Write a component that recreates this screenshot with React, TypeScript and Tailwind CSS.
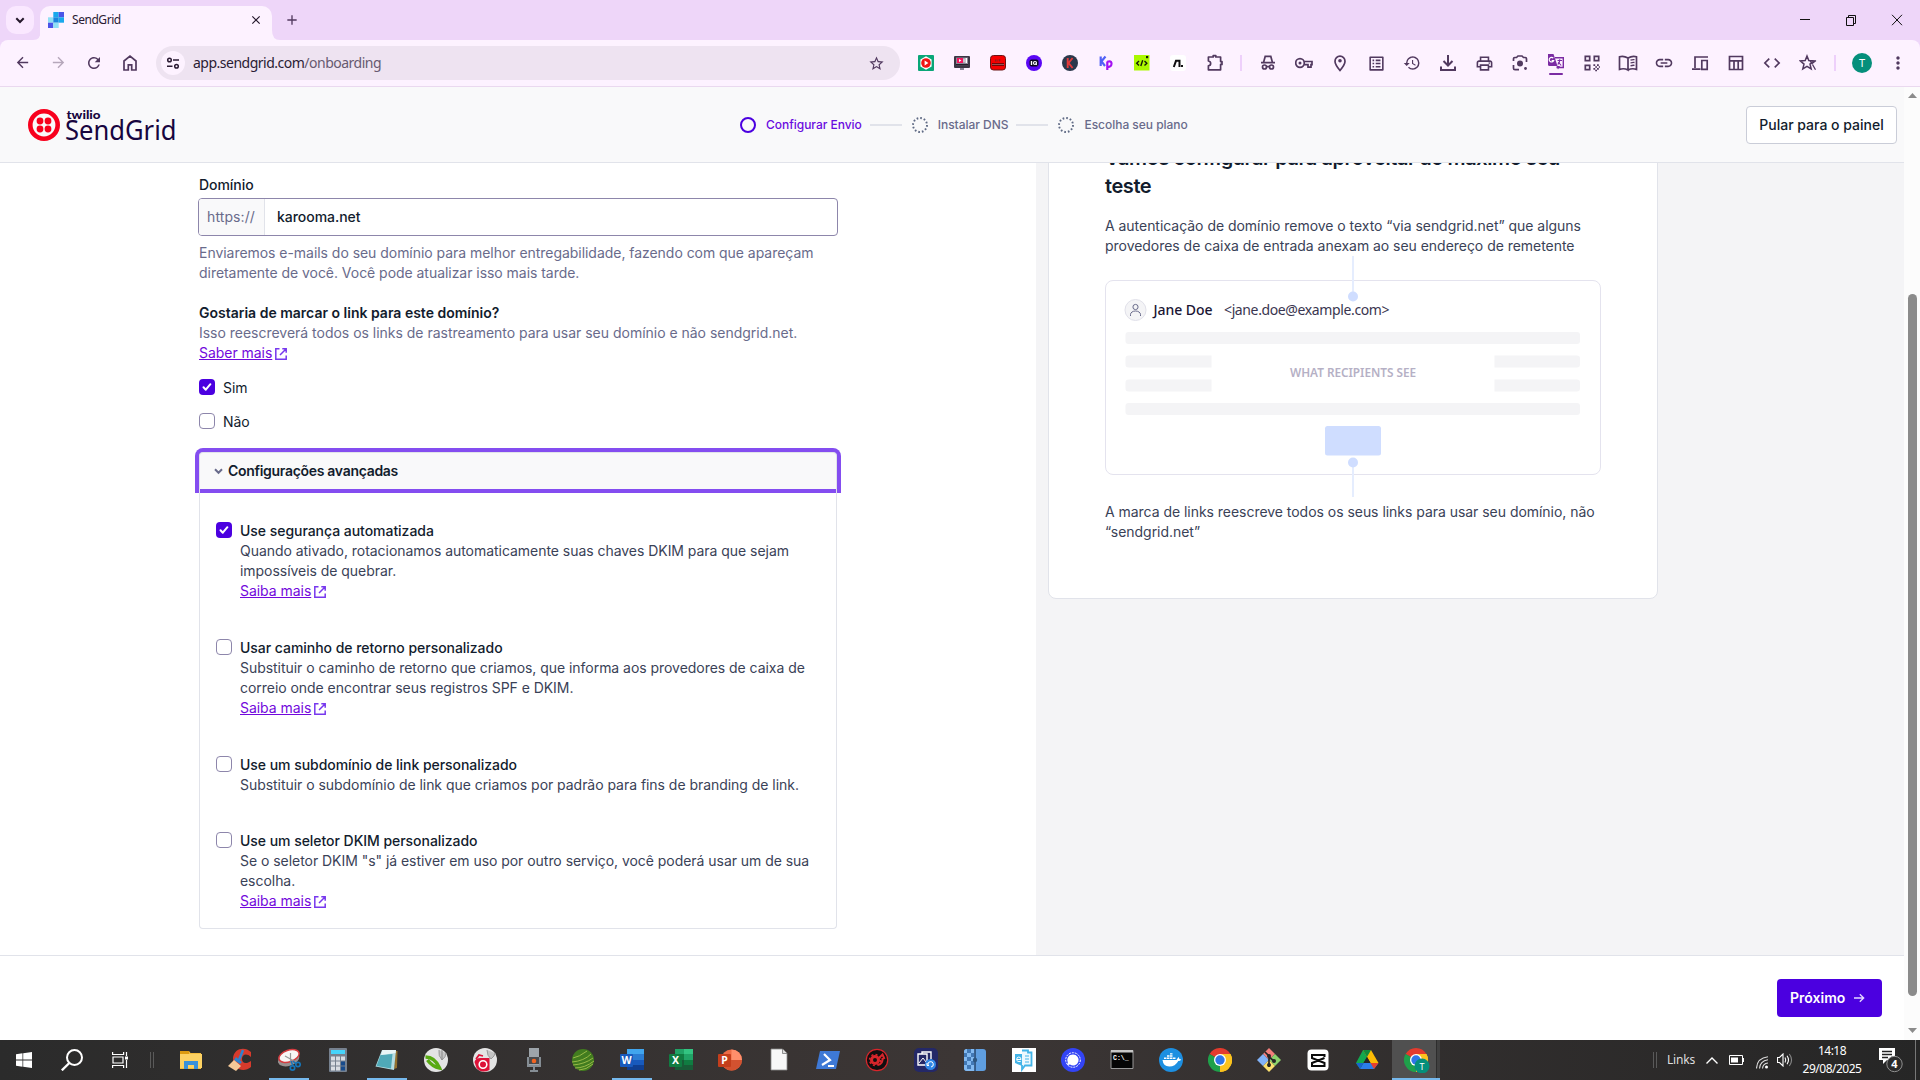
import React from "react";
import {
  MdArrowBack,
  MdArrowForward,
  MdRefresh,
  MdStarBorder,
  MdHistory,
  MdOutlinePrint,
  MdOutlineListAlt,
  MdLink,
  MdCode,
  MdMoreVert,
  MdClose,
  MdAdd,
} from "react-icons/md";

type Kids = { children: React.ReactNode };

/* ---------- Toolbar icons ---------- */

const ink = "#51395f";

function Glyph({ children, size = 18, box = 18 }: Kids & { size?: number; box?: number }) {
  return (
    <svg width={size} height={size} viewBox={`0 0 ${box} ${box}`} fill="none" stroke={ink} strokeWidth="1.7">
      {children}
    </svg>
  );
}

const extensionIcons: React.ReactNode[] = [
  <svg width="16" height="16" viewBox="0 0 16 16">
    <rect width="16" height="16" rx="1" fill="#0aa678" />
    <path d="M8 1.2 13.6 4.6v6.8L8 14.8 2.4 11.4V4.6z" fill="#fff" />
    <circle cx="8" cy="8" r="4.8" fill="#f01414" />
    <path d="M6.6 5.6v4.8L10.4 8z" fill="#fff" />
  </svg>,
  <svg width="16" height="16" viewBox="0 0 16 16">
    <rect y="1" width="16" height="12" rx="1" fill="#3b3644" />
    <rect x="2" y="2.5" width="12" height="8" fill="#8d8797" />
    <rect x="3" y="3" width="6" height="5" fill="#f3165e" />
    <path d="m5 4 2.4 1.4L5 7z" fill="#fff" />
    <path d="M9.500 3.500h1v4h-1zM11.500 3h1.500v5h-1.500z" fill="#fff" />
    <rect x="2" y="9" width="12" height="1.500" fill="#24202c" />
    <rect x="6" y="13" width="4" height="2" fill="#8c8798" />
  </svg>,
  <svg width="16" height="16" viewBox="0 0 16 16">
    <rect x=".5" y=".5" width="15" height="14.500" rx="3" fill="#f60000" stroke="#6b1414" />
    <path d="M5.500 4.500v2M7 4.500v2M8.500 5h2M9.500 4.500v2" stroke="#7a2020" strokeWidth=".8" />
    <path d="M2 9.500h12" stroke="#4a0808" strokeWidth="2.500" />
    <path d="M2.500 9.500h11" stroke="#e0a0a0" strokeWidth="1" strokeDasharray="1 1" />
  </svg>,
  <svg width="16" height="16" viewBox="0 0 16 16">
    <circle cx="8" cy="8" r="8" fill="#5a06f5" />
    <rect x="3.500" y="4.500" width="9" height="7" rx="2" fill="#0b0520" />
    <path d="M5.500 6v4" stroke="#fff" strokeWidth="1.400" />
    <circle cx="9" cy="8" r="1.500" stroke="#fff" strokeWidth="1.200" fill="none" />
    <path d="m9.500 8.500 1.500 1.700" stroke="#fff" />
  </svg>,
  <svg width="16" height="16" viewBox="0 0 16 16">
    <circle cx="8" cy="8" r="8" fill="#2b384b" />
    <path d="M5.700 3v10M10.600 3 6.600 8l4 5" stroke="#e23b3b" strokeWidth="1.900" fill="none" />
  </svg>,
  <svg width="16" height="16" viewBox="0 0 16 16" fill="none" strokeWidth="2.200">
    <path d="M2.700 1.500v9.500M7.500 1.500 3.500 6.300l3.500 4.700" stroke="#5161f6" />
    <path d="M9.300 15V6.500M9.300 6.800c4-1.300 4.700.7 4 3.200-.6 2-2.600 2-4 1.500" stroke="#a412f2" />
  </svg>,
  <svg width="16" height="16" viewBox="0 0 16 16">
    <rect width="15.500" height="15.500" fill="#abf900" />
    <path d="M5 6 2.700 8.200 5 10.400M10.500 6l2.300 2.200-2.300 2.200M8.700 5.300 6.800 11" stroke="#151b08" strokeWidth="1.400" fill="none" />
    <rect x="12" y="1" width="2.200" height="2.200" fill="#151b08" />
  </svg>,
  <svg width="16" height="16" viewBox="0 0 16 16">
    <rect width="16" height="16" rx="3" fill="#fff" />
    <path d="M3.800 12 6 5.800h3.500V12" stroke="#111" strokeWidth="2" fill="none" />
    <rect x="11" y="10" width="2" height="2" fill="#111" />
  </svg>,
  <svg className="ml-px" width="18" height="18" viewBox="0 0 18 18" fill="none" stroke={ink} strokeWidth="1.700" strokeLinejoin="round">
    <path d="M2.400 3h4.800V1.600h2.600V3h4.800v4.600h1.400v2.800h-1.400v5.400H2.400v-4c3-.6 3-4.200 0-4.800z" />
  </svg>,
];

const toolIcons: React.ReactNode[] = [
  <Glyph>
    <path d="M2 8.700h14M4.600 8.200l1.600-5.800h5.600l1.600 5.800" />
    <circle cx="5.500" cy="13" r="2" />
    <circle cx="12.500" cy="13" r="2" />
    <path d="M7.500 12.600h3" />
  </Glyph>,
  <Glyph>
    <circle cx="5" cy="9" r="4.300" />
    <circle cx="5" cy="9" r="1.500" fill={ink} stroke="none" />
    <path d="M9.200 7.500H17v3.200h-1v2.500h-3v-2.500H9.200" />
  </Glyph>,
  <Glyph>
    <path d="M9 16.500C5.500 12.300 4 9.700 4 7.200a5 5 0 0 1 10 0c0 2.500-1.500 5.100-5 9.300z" />
    <circle cx="9" cy="6.800" r="1.800" fill={ink} stroke="none" />
  </Glyph>,
  <MdOutlineListAlt size={19} color={ink} />,
  <MdHistory size={18} color={ink} />,
  <Glyph>
    <path d="M9 1v10M4.500 7 9 11.500 13.500 7" strokeWidth="2" />
    <path d="M2 12.500V16h14v-3.500" strokeWidth="2" />
  </Glyph>,
  <MdOutlinePrint size={19} color={ink} />,
  <Glyph>
    <path d="M2.500 7V4.800q0-1.300 1.300-1.300H5.500L7 2h4l1.500 1.500h1.700q1.300 0 1.300 1.300V8M2.500 11v3.200q0 1.500 1.500 1.500h4" />
    <circle cx="9" cy="9.500" r="3" fill={ink} stroke="none" />
    <circle cx="14.500" cy="14.500" r="1.400" fill={ink} stroke="none" />
  </Glyph>,
  <svg width="18" height="24" viewBox="0 0 18 24">
    <path d="M8 6.700h8.300v9.800H9.500" fill="none" stroke="#7b2ba3" strokeWidth="1.400" />
    <path d="M1 3h5.500l4 12H2.500Q1 15 1 13.500z" fill="#7b2ba3" />
    <path d="M6.300 7.200a2.300 2.300 0 1 0 .3 2.500H4.700" stroke="#fff" strokeWidth="1.200" fill="none" />
    <path d="m9.500 15 1.500 3.500 2-3.500z" fill="#7b2ba3" />
    <path d="M10.500 9.500h4.500M12.700 8.300v1.200c0 2-.7 3-2 4M11.200 11l3 3.500" stroke="#7b2ba3" strokeWidth="1.100" fill="none" />
    <rect x="2" y="22" width="14" height="2" rx="1" fill="#7b2ba3" />
  </svg>,
  <Glyph>
    <path d="M2.300 2.300h4.400v4.400H2.300zM11.300 2.300h4.400v4.400h-4.400zM2.300 11.300h4.400v4.400H2.300z" />
    <path d="M10.400 11.200h1.800M14 11.200h1.800M12.200 13h1.800M15.800 13h1.200M10.400 14.800h1.800M14 14.800h1.800M12.200 16.500h1.800" strokeWidth="1.700" />
  </Glyph>,
  <Glyph size={20} box={20}>
    <path d="M10 5v12c-3-1.600-5.500-1.600-8.500-.6V3.800C4.500 2.900 7 3.300 10 5c3-1.700 5.500-2.100 8.500-1.200v12.600c-3-1-5.500-1-8.500.6" />
    <path d="M12.500 7.200q2-.7 4-.5M12.500 10q2-.7 4-.5M12.500 12.800q2-.7 4-.5" strokeWidth="1.300" />
  </Glyph>,
  <MdLink size={20} color={ink} />,
  <Glyph>
    <path d="M17 3H4v11M1 15.200h8.500M10.800 6.500h5.400v8.800h-5.400z" />
  </Glyph>,
  <Glyph>
    <path d="M2.500 2.500h13v13h-13zM2.500 6.800h13M7 7v8M11.200 7v8" />
  </Glyph>,
  <MdCode size={20} color={ink} />,
  <Glyph>
    <path d="m8 2 1.800 4.500 4.900.4-3.700 3.200 1.200 4.900L8 12.400 3.800 15 5 10.100 1.300 6.900l4.900-.4z" strokeWidth="1.500" />
    <path d="m12.500 10 4.500-3.500M13.500 10.500l3 5.300M11 6.500l2 3" strokeWidth="1.300" />
  </Glyph>,
];

function BrowserChrome() {
  return (
    <div className="bg-[#eed6f9]">
      <div className="flex h-10 items-end">
        <div className="mb-1.5 ml-1.5 flex h-7 w-7 items-center justify-center rounded-[10px] bg-[#fae8ff]">
          <svg width="10" height="7" viewBox="0 0 10 7" fill="none" stroke="#24172b" strokeWidth="2"><path d="m1.300 1.300 3.700 3.700 3.700-3.700" /></svg>
        </div>
        <svg className="-ml-px mr-[-1px]" width="8" height="10" viewBox="0 0 8 10"><path d="M0 10Q8 10 8 0v10z" fill="#fdf2ff" /></svg>
        <div className="flex h-[34px] w-[232px] items-center rounded-t-[10px] bg-[#fdf2ff] pb-1.5 pr-[9px] pl-2">
          <svg width="16" height="16" viewBox="0 0 16 16">
            <path d="M0 5.300h5.300v5.400H0z" fill="#8fe0f5" />
            <path d="M0 10.700h5.300V16H0z" fill="#4a54e8" />
            <path d="M5.300 0h5.400v5.300H5.300z" fill="#19a8ec" />
            <path d="M5.300 5.300h5.400v5.400H5.300z" fill="#1a86dd" />
            <path d="M10.700 0H16v5.300h-5.300z" fill="#4a54e8" />
            <path d="M10.700 5.300H16v5.400h-5.300z" fill="#19a8ec" />
            <path d="M5.300 10.700h5.400V16H5.300z" fill="#8fe0f5" />
          </svg>
          <span className="ml-2 flex-1 text-xs tracking-[-0.45px] text-[#2a1b33]">SendGrid</span>
          <MdClose size={14} color="#24172b" />
        </div>
        <svg className="mr-1" width="8" height="10" viewBox="0 0 8 10"><path d="M0 0q0 10 8 10H0z" fill="#fdf2ff" /></svg>
        <MdAdd className="mb-3" size={16} color="#51395f" />
        <div className="mb-[14px] ml-auto flex items-center pr-[17px]">
          <svg width="104" height="12" viewBox="0 0 104 12" fill="none" stroke="#111">
            <path d="M1 5.500h10" />
            <path d="M47.500 3.500h7v8h-7zM49.500 3.500v-2h7v8h-2" />
            <path d="m93 .8 10 10.400M103 .8 93 11.200" />
          </svg>
        </div>
      </div>
      <div className="flex h-[47px] items-center rounded-t-lg border-b border-[#ead9ef] bg-[#fdf2ff]">
        <div className="flex w-[152px] pl-1">
          <div className="flex w-9 justify-center"><MdArrowBack size={17} color={ink} /></div>
          <div className="flex w-9 justify-center"><MdArrowForward size={17} color="#b6a7bb" /></div>
          <div className="flex w-9 justify-center"><MdRefresh size={18} color={ink} /></div>
          <div className="flex w-9 justify-center">
            <Glyph><path d="M3 16V7l6-4.800L15 7v9h-4.300v-5.200H7.300V16z" /></Glyph>
          </div>
        </div>
        <div className="ml-1 flex h-[34px] w-[744px] items-center rounded-full bg-[#eee3f1] pr-[15px] pl-[5px]">
          <div className="flex h-6 w-6 items-center justify-center rounded-full bg-[#fdf2ff]">
            <svg width="14" height="14" viewBox="0 0 14 14" fill="none" stroke="#2a1b33" strokeWidth="1.500">
              <circle cx="3.500" cy="4" r="1.800" /><path d="M7 4h6M1 10.300h5.500" /><circle cx="10.500" cy="10.300" r="1.800" />
            </svg>
          </div>
          <span className="ml-2 flex-1 text-sm tracking-[-0.5px] text-[#675a70]"><span className="text-[#2a1b33]">app.sendgrid.com</span>/onboarding</span>
          <MdStarBorder size={17} color={ink} />
        </div>
        <div className="ml-2 flex items-center">
          {extensionIcons.map((icon, i) => <div key={i} className="flex w-9 justify-center">{icon}</div>)}
          <div className="flex w-[18px] justify-center"><div className="h-4 w-0.5 bg-[#eed0fb]" /></div>
          {toolIcons.map((icon, i) => <div key={i} className="flex h-6 w-9 items-center justify-center">{icon}</div>)}
          <div className="flex w-[18px] justify-center"><div className="h-4 w-0.5 bg-[#eed0fb]" /></div>
          <div className="flex w-9 justify-center">
            <div className="flex h-5 w-5 items-center justify-center rounded-full bg-[#058f7b] text-[11px] text-white">T</div>
          </div>
          <div className="flex w-9 justify-center"><MdMoreVert size={20} color={ink} /></div>
        </div>
      </div>
    </div>
  );
}

/* ---------- Page ---------- */

function Logo() {
  return (
    <svg width="150" height="40" viewBox="0 0 150 40">
      <circle cx="16" cy="20" r="13.700" fill="none" stroke="#f8001d" strokeWidth="4.600" />
      {[[12, 16], [20, 16], [12, 24], [20, 24]].map(([x, y]) => <circle key={`${x}-${y}`} cx={x} cy={y} r="3.400" fill="#f8001d" />)}
      <text x="38.500" y="13.500" fontSize="12" fontWeight="900" fontFamily="Lato, sans-serif" fill="#170540" textLength="34" lengthAdjust="spacingAndGlyphs">twilio</text>
      <text x="37" y="35" fontSize="26.500" fontFamily="'Noto Sans', sans-serif" fill="#170540" textLength="111.500" lengthAdjust="spacingAndGlyphs">SendGrid</text>
    </svg>
  );
}

function Step({ label, active }: { label: string; active?: boolean }) {
  return (
    <div className="flex items-center">
      <svg width="16" height="16" viewBox="0 0 16 16" fill="none">
        {active
          ? <circle cx="8" cy="8" r="7" stroke="#4b00e0" strokeWidth="2" />
          : <circle cx="8" cy="8" r="7" stroke="#606b85" strokeWidth="1.900" strokeDasharray="1.700 1.965" />}
      </svg>
      <span className={active ? "pl-2.5 text-xs font-medium tracking-[-0.03px] whitespace-nowrap text-[#6a0be0]" : "pl-2.5 text-xs font-medium tracking-[-0.03px] whitespace-nowrap text-[#696b8b]"}>{label}</span>
    </div>
  );
}

function PageHeader() {
  return (
    <header className="flex h-[76px] items-center border-b border-[#e1e3ea] bg-[#f9f9fa] pr-[7px] pl-7">
      <div className="w-[712px]"><Logo /></div>
      <div className="flex flex-1 items-center">
        <Step label="Configurar Envio" active />
        <div className="mr-[10px] ml-2 h-0.5 w-8 bg-[#e1e3ea]" />
        <Step label="Instalar DNS" />
        <div className="mr-[10px] ml-2 h-0.5 w-8 bg-[#e1e3ea]" />
        <Step label="Escolha seu plano" />
      </div>
      <button className="h-[38px] w-[151px] rounded border border-[#cacdd8] bg-white text-sm font-medium whitespace-nowrap text-[#121c2d]">Pular para o painel</button>
    </header>
  );
}

function Check({ on }: { on?: boolean }) {
  return on ? (
    <div className="flex h-4 w-4 shrink-0 items-center justify-center rounded bg-[#4b00e0]">
      <svg width="10" height="10" viewBox="0 0 10 10" fill="none" stroke="#fff" strokeWidth="2" strokeLinecap="round" strokeLinejoin="round"><path d="m1.500 5.300 2.300 2.400 4.600-5.500" /></svg>
    </div>
  ) : (
    <div className="h-4 w-4 shrink-0 rounded border border-[#8d86ab] bg-white" />
  );
}

function MoreLink({ children }: Kids) {
  return (
    <a className="flex h-5 items-center text-sm leading-5 tracking-[-0.04px] text-[#7208dc]">
      <span className="underline">{children}</span>
      <svg className="mt-0.5 ml-[3px]" width="12" height="12" viewBox="0 0 12 12" fill="none" stroke="#7738ee" strokeWidth="1.500">
        <path d="M4.500.8H.8v10.400h10.400V7.500M7.300.8h3.900v3.900M11 1 5 7" />
      </svg>
    </a>
  );
}

function Option({ title, text, on, link }: { title: string; text: string; on?: boolean; link?: boolean }) {
  return (
    <div className="flex">
      <div className="mt-px mr-2"><Check on={on} /></div>
      <div className="text-sm leading-5 text-[#3a4257]">
        <div className="font-medium text-[#121c2d]">{title}</div>
        <p className="w-[575px]">{text}</p>
        {link && <MoreLink>Saiba mais</MoreLink>}
      </div>
    </div>
  );
}

function FormColumn() {
  return (
    <main className="w-[1036px] bg-white pt-3 pl-[199px] text-sm leading-5 tracking-[-0.04px]">
      <div className="font-medium text-[#121c2d]">Domínio</div>
      <div className="mt-[3px] -ml-px flex h-[38px] w-[640px] overflow-hidden rounded border border-[#8d86ab]">
        <div className="flex w-[66px] items-center border-r border-[#e1e3ea] bg-[#f9f9fa] pl-2 tracking-[0.1px] text-[#696b8b]">https://</div>
        <div className="flex items-center pl-3 font-medium text-[#121c2d]">karooma.net</div>
      </div>
      <p className="mt-[7px] w-[638px] text-[#696b8b]">Enviaremos e-mails do seu domínio para melhor entregabilidade, fazendo com que apareçam diretamente de você. Você pode atualizar isso mais tarde.</p>
      <div className="mt-5 font-semibold tracking-normal text-[#121c2d]">Gostaria de marcar o link para este domínio?</div>
      <p className="tracking-[-0.015px] text-[#696b8b]">Isso reescreverá todos os links de rastreamento para usar seu domínio e não sendgrid.net.</p>
      <MoreLink>Saber mais</MoreLink>
      <div className="mt-[15px] flex text-[#121c2d]"><div className="mt-px mr-2"><Check on /></div>Sim</div>
      <div className="mt-[14px] flex text-[#121c2d]"><div className="mt-px mr-2"><Check /></div>Não</div>
      <div className="mt-5 w-[638px]">
        <div className="flex h-[37px] items-center rounded-t border border-b-0 border-[#e1e3ea] bg-[#f9f9fa] pl-[14px] font-semibold tracking-[-0.3px] text-[#121c2d] ring-4 ring-[#844df0]">
          <svg className="mr-[5px]" width="9" height="7" viewBox="0 0 9 7" fill="none" stroke="#696b8b" strokeWidth="2"><path d="m1 1.300 3.500 3.500L8 1.300" /></svg>
          Configurações avançadas
        </div>
        <div className="h-[440px] rounded-b border border-t-0 border-[#e1e3ea] pt-8 pl-4">
          <Option on link title="Use segurança automatizada" text="Quando ativado, rotacionamos automaticamente suas chaves DKIM para que sejam impossíveis de quebrar." />
          <div className="h-[37px]" />
          <Option link title="Usar caminho de retorno personalizado" text="Substituir o caminho de retorno que criamos, que informa aos provedores de caixa de correio onde encontrar seus registros SPF e DKIM." />
          <div className="h-[37px]" />
          <Option title="Use um subdomínio de link personalizado" text="Substituir o subdomínio de link que criamos por padrão para fins de branding de link." />
          <div className="h-9" />
          <Option link title="Use um seletor DKIM personalizado" text={'Se o seletor DKIM "s" já estiver em uso por outro serviço, você poderá usar um de sua escolha.'} />
        </div>
      </div>
    </main>
  );
}

function MailIllustration() {
  return (
    <svg className="block" width="496" height="246" viewBox="0 0 496 246">
      <rect x=".5" y="24.500" width="495" height="194" rx="7.500" fill="#fff" stroke="#e4e3ee" />
      <rect x="247" y="0" width="2" height="38" fill="#e5edfe" />
      <circle cx="248" cy="40.500" r="5" fill="#cfddff" />
      <circle cx="30.500" cy="54" r="10.500" fill="#f4f4f6" stroke="#e1e1ea" />
      <circle cx="30.500" cy="51" r="2.600" fill="none" stroke="#696b8b" />
      <path d="M25.500 60v-1.500a5 3.500 0 0 1 10 0V60" fill="none" stroke="#696b8b" />
      <text x="48.500" y="59.300" fontSize="14" fontWeight="500" fontFamily="'Noto Sans', sans-serif" fill="#1a1533" textLength="59">Jane Doe</text>
      <text x="119" y="59.300" fontSize="14" fontFamily="'Noto Sans', sans-serif" fill="#3a3650" textLength="165.500">{"<jane.doe@example.com>"}</text>
      <g fill="#f4f4f6">
        <rect x="20.500" y="76" width="454.500" height="12" rx="3" />
        <path d="M23.500 99.500h83v12h-83q-3 0-3-3v-6q0-3 3-3zM23.500 123.500h83v12h-83q-3 0-3-3v-6q0-3 3-3z" />
        <path d="M389.500 99.500h82.500q3 0 3 3v6q0 3-3 3h-82.500zM389.500 123.500h82.500q3 0 3 3v6q0 3-3 3h-82.500z" />
        <rect x="20.500" y="147" width="454.500" height="12" rx="3" />
      </g>
      <text x="248" y="121.300" fontSize="12.500" fontWeight="600" textAnchor="middle" fontFamily="'Noto Sans', sans-serif" fill="#b5b0c5" textLength="126" lengthAdjust="spacingAndGlyphs">WHAT RECIPIENTS SEE</text>
      <rect x="220" y="170" width="56" height="29.500" rx="2.500" fill="#cfddff" />
      <rect x="247" y="206" width="2" height="35" fill="#e5edfe" />
      <circle cx="248" cy="206.500" r="5" fill="#cfddff" />
    </svg>
  );
}

function InfoColumn() {
  return (
    <aside className="flex-1 overflow-hidden bg-[#f4f4f6] pl-3">
      <div className="-mt-20 h-[516px] w-[610px] rounded-lg border border-[#e1e3ea] bg-white pt-[60px] pl-14 text-sm leading-5 tracking-[-0.035px] text-[#3a4257]">
        <h2 className="w-[500px] text-xl leading-7 font-semibold tracking-[-0.42px] text-[#121c2d]">Vamos configurar para aproveitar ao máximo seu<br />teste</h2>
        <p className="mt-4 w-[500px]">A autenticação de domínio remove o texto “via sendgrid.net” que alguns provedores de caixa de entrada anexam ao seu endereço de remetente</p>
        <MailIllustration />
        <p className="w-[500px]">A marca de links reescreve todos os seus links para usar seu domínio, não “sendgrid.net”</p>
      </div>
    </aside>
  );
}

function Scrollbar() {
  return (
    <div className="flex w-4 flex-col items-center bg-[#fcfcfc]">
      <svg className="mt-[6px] ml-px" width="9" height="5" viewBox="0 0 9 5"><path d="M4.500 0 9 5H0z" fill="#8b8b8b" /></svg>
      <div className="mt-[196px] h-[702px] w-[9px] rounded-full bg-[#8b8b8b]" />
      <svg className="mt-8 ml-px" width="9" height="5" viewBox="0 0 9 5"><path d="M0 0h9L4.500 5z" fill="#8b8b8b" /></svg>
    </div>
  );
}

/* ---------- Taskbar ---------- */

function App24({ children }: Kids) {
  return <svg width="24" height="24" viewBox="0 0 24 24">{children}</svg>;
}

function Office({ letter, kids, tile }: { letter: string; kids: React.ReactNode; tile: string }) {
  return (
    <App24>
      {kids}
      <rect x="0" y="6" width="13" height="13" rx="1" fill={tile} />
      <text x="6.500" y="16" fontSize="10.500" fontWeight="700" textAnchor="middle" fill="#fff" fontFamily="'Noto Sans', sans-serif">{letter}</text>
    </App24>
  );
}

function ChromeShapes() {
  return (
    <>
      <path d="M12 12 1.600 6A12 12 0 0 1 22.400 6z" fill="#e33b2e" />
      <path d="M12 12 22.400 6A12 12 0 0 1 12 24z" fill="#fcc31e" />
      <path d="M12 12v12A12 12 0 0 1 1.600 6z" fill="#1fa04a" />
      <path d="M12 6h10.400A12 12 0 0 1 12 24l5.200-9z" fill="#fcc31e" />
      <circle cx="12" cy="12" r="6" fill="#fff" />
      <circle cx="12" cy="12" r="4.700" fill="#2f76e8" />
    </>
  );
}

const taskApps: { icon: React.ReactNode; open?: boolean }[] = [
  { icon: <App24><path d="M1 3h9l1.500 2H22v16H1z" fill="#f5bd3d" /><path d="M1 3h9v3H1z" fill="#dd9b10" /><path d="M1 6h22v14H1z" fill="#fdd263" /><path d="M5 21v-8h14v8h-4v-4H9v4z" fill="#3a91da" /></App24> },
  { icon: <App24><path d="M23 4C17-2 6 0 5 10c0 12 11 15 18 9v-6c-4 3-9 3-9-2s5-6 9-2z" fill="#d63a2c" /><path d="M15 2 11 12" stroke="#2c83cf" strokeWidth="2.500" /><path d="m8 9 6 5-2 2-6-4z" fill="#2c83cf" /><path d="M6 12 0 18l8 5 5-5z" fill="#f5c998" /></App24> },
  { open: true, icon: <App24><ellipse cx="11.500" cy="11.500" rx="11" ry="6.500" fill="#969090" transform="rotate(-18 11 11)" /><ellipse cx="12" cy="8" rx="10.500" ry="5.800" fill="#f8f6f6" stroke="#d53c40" strokeWidth="1.500" transform="rotate(-18 12 8)" /><path d="M13.500 5v9M8 8l9 5" stroke="#999" strokeWidth="1.200" /><path d="m14 13 2 5M16 13l3 3" stroke="#1675b8" strokeWidth="1.500" /><circle cx="15.500" cy="20" r="2.200" fill="none" stroke="#1675b8" strokeWidth="1.700" /><circle cx="21" cy="16.500" r="2.200" fill="none" stroke="#1675b8" strokeWidth="1.700" /></App24> },
  { icon: <App24><rect x="3" width="18" height="24" rx="1" fill="#76818f" /><path d="M5 2h14v4H5z" fill="#46d4fb" />{[8.500, 13.500, 18.500].map((y) => [5, 10, 15].map((x) => <rect key={`${x}-${y}`} x={x} y={y} width="4" height="4" fill={x === 15 && y > 9 ? "#174b8c" : "#d9dde3"} />))}</App24> },
  { open: true, icon: <App24><path d="M20 3h2.500l-.5 17-3 1z" fill="#92702e" /><path d="M7 2h14l-2 20L.5 18.500z" fill="#b5dde2" /><path d="m5.500 7 12-1-1.500 14.500L1.500 18z" fill="#4fa9b8" /><path d="M7.500 2H21l-.5 3L6 7z" fill="#e8f5f6" /></App24> },
  { icon: <App24><circle cx="12" cy="12" r="12" fill="#e4e4e4" /><path d="M1.500 9c6 0 11 4 14 11-6-1-9-4-12-8" fill="none" stroke="#58aa13" strokeWidth="3.500" /><path d="M15 2q-1 6 3 10 4-3 4-7" fill="#c4c4c4" stroke="#999" /><path d="M18 2v10" stroke="#888" /></App24> },
  { icon: <App24><circle cx="12" cy="12" r="12" fill="#e4e4e4" /><path d="M1.500 14q1-4 6-4h9v12q-8 4-13-2z" fill="#dc1238" /><circle cx="10" cy="16.500" r="3.800" fill="none" stroke="#fff" strokeWidth="1.600" /><path d="M3 11 6 7l4 1" fill="none" stroke="#dc1238" strokeWidth="1.800" /><path d="M14 2q0 6 4 9 4-3 4-6" fill="#c4c4c4" stroke="#999" /></App24> },
  { icon: <App24><path d="M7 0h10v17H7z" fill="#9da4aa" /><path d="M6 9v9h12V9" fill="none" stroke="#858d94" strokeWidth="2" /><path d="M12 18v5M8 23h8" stroke="#858d94" strokeWidth="2" /><path d="M7 9h10v7H7z" fill="#484a4d" /><circle cx="12" cy="13" r="2.300" fill="#f26522" /></App24> },
  { icon: <App24><circle cx="12" cy="12" r="11" fill="#427c1f" /><path d="M2 10q6-1 14-7M1 14q12-1 19-8M2 17q12-1 20-7M4 20q10 0 19-7M8 22q7 0 14-6" fill="none" stroke="#98b947" strokeWidth="1" /></App24> },
  { open: true, icon: <Office letter="W" tile="#185abd" kids={<><path d="M7 1h17v6H7z" fill="#41a5ee" /><path d="M7 6h17v6H7z" fill="#2b7cd3" /><path d="M7 12h17v5H7z" fill="#185abd" /><path d="M7 17h17v5H7z" fill="#103f91" /></>} /> },
  { icon: <Office letter="X" tile="#107c41" kids={<><path d="M6 1h9v6H6z" fill="#21a366" /><path d="M15 1h9v6h-9z" fill="#33c481" /><path d="M6 6h9v6H6z" fill="#107c41" /><path d="M15 6h9v6h-9z" fill="#21a366" /><path d="M6 12h9v10H6z" fill="#185c37" /><path d="M15 12h9v5h-9z" fill="#107c41" /><path d="M15 17h9v5h-9z" fill="#185c37" /></>} /> },
  { icon: <Office letter="P" tile="#c43e1c" kids={<><circle cx="13.500" cy="12" r="10.500" fill="#ed6c47" /><path d="M13.500 1.500A10.500 10.500 0 0 1 24 12H13.500z" fill="#ff8f6b" /><path d="M3 12h21a10.500 10.500 0 0 1-21 0z" fill="#d35230" /></>} /> },
  { icon: <App24><path d="M4 1h11.500L20 5.500V22H4z" fill="#f8f8f8" stroke="#8a8a8a" strokeWidth=".8" /><path d="M15.500 1v4.500H20" fill="#ddd" stroke="#777" strokeWidth=".8" /></App24> },
  { icon: <App24><path d="M4 3h20l-4 18H0z" fill="#3e79d6" /><path d="m8 6 6 6-8 5M12 18h6" fill="none" stroke="#fff" strokeWidth="2.200" /></App24> },
  { icon: <App24><circle cx="12" cy="12" r="10.700" fill="#110f10" stroke="#d7262b" strokeWidth="1.200" /><circle cx="10" cy="12" r="3.500" fill="none" stroke="#d7262b" strokeWidth="3" /><circle cx="10" cy="12" r="5.500" fill="none" stroke="#d7262b" strokeWidth="1.500" strokeDasharray="2 2.300" /><path d="M13 17q5-1 4.500-7M14 10l3.500-3.500 2 4.500" stroke="#d7262b" strokeWidth="2" fill="none" /></App24> },
  { icon: <App24><rect width="24" height="24" rx="5" fill="#242867" /><path d="M4 6h9v11H4zM8 6V4h9v7" fill="none" stroke="#fff" strokeWidth="1.400" /><path d="m5 15 4-5 3 4" stroke="#fff" fill="none" /><circle cx="16.500" cy="16.500" r="5.500" fill="#2f86e6" /><path d="M14 17a2.700 2.700 0 1 1 3 2M13 15v2.500h2" stroke="#fff" fill="none" /></App24> },
  { icon: <App24><rect x="1" y="1" width="22" height="22" rx="3" fill="#5f9ee0" /><path d="M1 4q0-3 3-3h8v22H4q-3 0-3-3z" fill="#82b9f0" /><path d="M4 1h4v4H4zM1 5h3v4H1zM8 5h3v4H8zM4 9h4v4H4zM1 13h3v4H1zM8 13h3v4H8zM4 17h4v4H4z" fill="#4279b6" /><path d="M12 1v22" stroke="#24466e" strokeWidth="1.500" /><circle cx="12" cy="12" r="2.200" fill="#2d557e" /></App24> },
  { icon: <App24><path d="M0 0h24v24H0z" fill="#fff" /><path d="M10 2.500h6v2h3.500v13H13l-3 4V17" fill="#ecf8fe" stroke="#43b4e8" strokeWidth="1.800" /><path d="M3 6h7v12l-7-3z" fill="#43b4e8" /><path d="M13 8h4M13 11h4M13 14h4" stroke="#43b4e8" /><path d="M4.700 11.500H9q0-2.500-2.200-2.500t-2.100 2.500q0 2.500 4 2" fill="none" stroke="#fff" /></App24> },
  { icon: <App24><circle cx="12" cy="12" r="12" fill="#3344f5" /><circle cx="12" cy="12" r="7.300" fill="none" stroke="#fff" strokeDasharray="2 1" /><path d="M12 6.500a5.500 5.500 0 1 1-3 10l-3 .8.800-3A5.500 5.500 0 0 1 12 6.500z" fill="#fff" /></App24> },
  { icon: <App24><path d="M1 2.500h22v18H1z" fill="#050505" stroke="#999" /><path d="M1 2h22v2.500H1z" fill="#c6c6c6" /><text x="3" y="11.500" fontSize="6.500" fontWeight="700" fill="#fff" fontFamily="'Liberation Mono', monospace">C:\_</text></App24> },
  { icon: <App24><circle cx="12" cy="12" r="12" fill="#1d8fe1" /><path d="M3.500 12h14l2-3q1 1 .8 2 1 0 2 .5-1 1.500-3 1.500-3 5.500-9 5.500-6 0-6.800-6.500z" fill="#fff" /><path d="M5 9.500h2.500V11H5zM8 9.500h2.500V11H8zM11 9.500h2.500V11H11zM14 9.500h2.500V11H14zM8 7.300h2.500v1.500H8zM11 7.300h2.500v1.500H11zM11 5.300h2.500v1.300H11z" fill="#fff" /></App24> },
  { icon: <App24><ChromeShapes /></App24> },
  { icon: <App24><path d="m12 0 6 6-6 6-6-6z" fill="#f27e7b" /><path d="m18 6 6 6-6 6-6-6z" fill="#8bd36c" /><path d="m6 6 6 6-6 6-6-6z" fill="#82b2f7" /><path d="m12 12 6 6-6 6-6-6z" fill="#fbe06e" /><path d="m8 4 4 4v11M12 9l5 4" stroke="#252525" strokeWidth="1.700" fill="none" /><circle cx="12" cy="8" r="2" fill="#252525" /><circle cx="12" cy="17" r="2" fill="#252525" /><circle cx="17" cy="13" r="2" fill="#252525" /></App24> },
  { icon: <App24><rect x="1.500" y="1.500" width="21" height="21" rx="4" fill="#fff" /><path d="M18.500 9V7H6v3l12.500 5v3H6v-3l12.500-5" fill="none" stroke="#0b0b0b" strokeWidth="2" /></App24> },
  { icon: <App24><path d="M8 2h8l-4 7z" fill="#0f8a3c" /><path d="M8 2 1 15l4 6 7-12z" fill="#12a84f" /><path d="M8 2h8l7.500 13h-8z" fill="#fcbc05" /><path d="M8 2 12 9l4-7z" fill="#0f8a3c" /><path d="M12 9 8.500 15h7z" fill="#262626" /><path d="M5 21h14l4.500-6H8.500z" fill="#2b7de9" /><path d="M15.500 15h8L19 21z" fill="#e5412f" /><path d="M1 15h7.500L5 21z" fill="#1765cf" /></App24> },
];

function Taskbar() {
  return (
    <footer className="flex h-10 items-stretch bg-linear-to-r from-[#2b2b2b] via-[#3c3635] to-[#262626] text-white">
      <div className="flex w-12 items-center justify-center">
        <svg width="16" height="16" viewBox="0 0 16 16" fill="#fff"><path d="m0 2.200 6.500-.9v6.300H0zM7.200 1.200 16 0v7.600H7.200zM0 8.400h6.500v6.300L0 13.800zM7.200 8.400H16V16l-8.800-1.200z" /></svg>
      </div>
      <div className="flex w-12 items-center justify-center">
        <svg width="22" height="22" viewBox="0 0 22 22" fill="none" stroke="#fff" strokeWidth="2"><circle cx="13.500" cy="8.500" r="7.500" /><path d="M8.300 14 .8 21.300" strokeWidth="2.400" /></svg>
      </div>
      <div className="flex w-12 items-center justify-center">
        <svg width="17" height="16" viewBox="0 0 17 16" fill="none" stroke="#fff" strokeWidth="1.200"><path d="M.6 0v2.500h11V0M.6 16v-2.500h11V16M1 5h10v6H1zM14.500 0v4M14.500 8v8" /><path d="M13 4.500h3v3h-3z" fill="#fff" stroke="none" /></svg>
      </div>
      <div className="ml-[6px] flex w-[16px] items-center gap-0.5"><div className="h-4 w-px bg-[#5a5a5a]" /><div className="h-4 w-px bg-[#5a5a5a]" /></div>
      <div className="flex">
        {taskApps.map((app, i) => (
          <div key={i} className="flex h-10 w-[49px] flex-col items-center">
            <div className="flex h-[38px] items-center pt-0.5">{app.icon}</div>
            {app.open && <div className="h-0.5 w-10 bg-[#76b9ed]" />}
          </div>
        ))}
        <div className="ml-px flex h-10 w-12 flex-col">
          <div className="flex h-[38px] bg-[#505050]">
            <div className="flex flex-1 items-center pt-0.5 pl-3">
              <svg width="27" height="26" viewBox="0 -1 27 26">
                <ChromeShapes />
                <circle cx="18" cy="18" r="7.500" fill="#058f7b" />
                <text x="18" y="21.500" fontSize="9" textAnchor="middle" fill="#fff" fontFamily="'Noto Sans', sans-serif">T</text>
              </svg>
            </div>
            <div className="w-1 border-l border-[#2d2d2d] bg-[#404040]" />
          </div>
          <div className="h-0.5 bg-[#76b9ed]" />
        </div>
      </div>
      <div className="ml-auto flex items-center text-xs">
        <div className="flex gap-0.5"><div className="h-4 w-px bg-[#5a5a5a]" /><div className="h-4 w-px bg-[#5a5a5a]" /></div>
        <span className="ml-[10px] w-[39px] tracking-[-0.2px] text-[#dedede]">Links</span>
        <svg width="12" height="7" viewBox="0 0 12 7" fill="none" stroke="#fff" strokeWidth="1.400"><path d="m.5 6.500 5.500-5.500 5.500 5.500" /></svg>
        <svg className="ml-[11px]" width="15" height="10" viewBox="0 0 15 10" fill="none" stroke="#fff"><path d="M.5.5h13v9H.5z" /><path d="M2 2.500h7v5H2z" fill="#fff" stroke="none" /><path d="M14.500 3v4" /></svg>
        <svg className="mt-1 ml-3" width="12" height="13" viewBox="0 0 12 13" fill="none" stroke="#ddd" strokeWidth="1.100"><path d="M.5 12.500Q1 2 12 .8M3.500 12.500Q4 5 12 3.800M6.500 12.500q.5-5 5.500-5.500" /><circle cx="10.500" cy="11" r="1.500" fill="#fff" stroke="none" /></svg>
        <svg className="ml-[9px]" width="16" height="14" viewBox="0 0 16 14" fill="none" stroke="#fff" strokeWidth="1.100"><path d="M.5 4.500h2l3.500-3.500v12L2.500 9.500h-2z" /><path d="M8 4.500q1.500 2.500 0 5M10 2.800q3 4.200 0 8.400" /><path d="M12.300 1q4.500 6 0 12" stroke="#888" /></svg>
        <div className="ml-2 w-[62px] text-center text-xs leading-[18px] tracking-[-0.5px] whitespace-nowrap"><div>14:18</div><div>29/08/2025</div></div>
        <svg className="ml-[15px]" width="26" height="26" viewBox="0 0 26 26" fill="none"><path d="M1 1h16v12H9l-4 4v-4H1z" fill="#fff" /><path d="M4 4.500h10M4 7.500h10M4 10.500h6" stroke="#222" strokeWidth="1.300" /><circle cx="16.500" cy="17" r="7.700" fill="#2b2b2b" stroke="#8e8e8e" /><text x="16.500" y="21" fontSize="11" fontWeight="700" textAnchor="middle" fill="#fff" fontFamily="'Noto Sans', sans-serif">4</text></svg>
        <div className="mr-1 ml-[11px] h-10 w-px bg-[#777]" />
      </div>
    </footer>
  );
}

export default function App() {
  return (
    <div className="flex h-[1080px] w-[1920px] flex-col overflow-hidden bg-white font-['Noto_Sans',sans-serif]">
      <BrowserChrome />
      <div className="flex min-h-0 flex-1 font-['Inter',sans-serif]">
        <div className="flex w-[1904px] flex-col">
          <PageHeader />
          <div className="flex min-h-0 flex-1 overflow-hidden">
            <FormColumn />
            <InfoColumn />
          </div>
          <div className="flex h-[85px] items-center justify-end border-t border-[#e1e3ea] bg-white pr-[22px]">
            <button className="mb-[1px] flex h-[38px] w-[105px] items-center rounded bg-[#4b00e0] pl-[13px] text-sm font-semibold text-white">
              Próximo
              <svg className="ml-[9px]" width="11" height="10" viewBox="0 0 11 10" fill="none" stroke="#e4d8ff" strokeWidth="1.300"><path d="M0 5h9.500M5.800 1.300 9.700 5 5.800 8.700" /></svg>
            </button>
          </div>
        </div>
        <Scrollbar />
      </div>
      <Taskbar />
    </div>
  );
}
